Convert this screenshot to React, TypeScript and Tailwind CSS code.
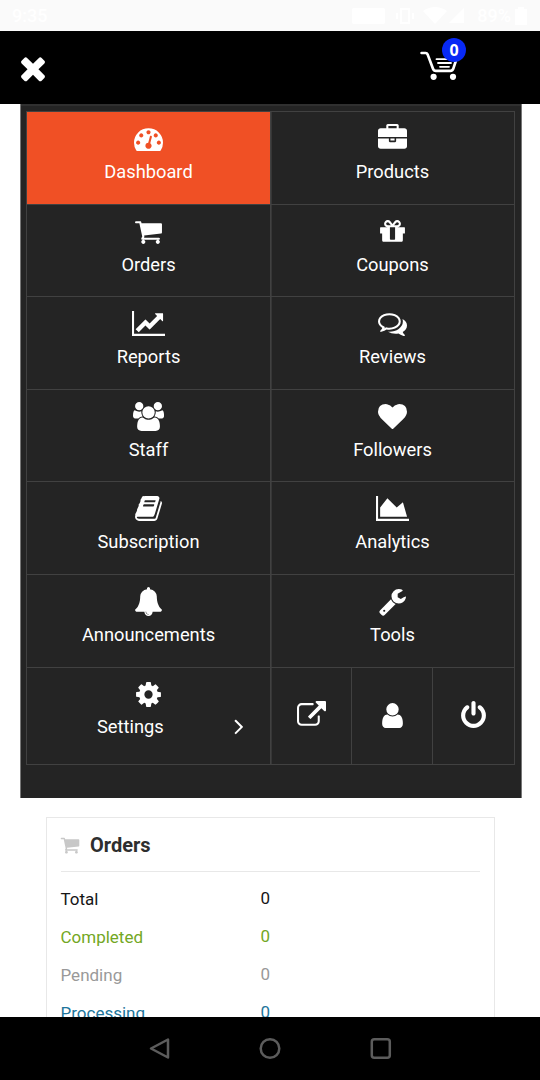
import React from "react";

type Glyph = { d: string; w?: number };

const glyphs: Record<string, Glyph> = {
  dashboard: { d: "M384 1152q0-53-37.5-90.5t-90.5-37.5-90.5 37.5-37.5 90.5 37.5 90.5 90.5 37.5 90.5-37.5 37.5-90.5zm192-448q0-53-37.5-90.5t-90.5-37.5-90.5 37.5-37.5 90.5 37.5 90.5 90.5 37.5 90.5-37.5 37.5-90.5zm428 481l101-382q6-26-7.5-48.5t-38.5-29.5-48 6.5-30 39.5l-101 382q-60 5-107 43.5t-63 98.5q-20 77 20 146t117 89 146-20 89-117q16-60-6-117t-72-91zm660-33q0-53-37.5-90.5t-90.5-37.5-90.5 37.5-37.5 90.5 37.5 90.5 90.5 37.5 90.5-37.5 37.5-90.5zm-640-640q0-53-37.5-90.5t-90.5-37.5-90.5 37.5-37.5 90.5 37.5 90.5 90.5 37.5 90.5-37.5 37.5-90.5zm448 192q0-53-37.5-90.5t-90.5-37.5-90.5 37.5-37.5 90.5 37.5 90.5 90.5 37.5 90.5-37.5 37.5-90.5zm320 448q0 261-141 483-19 29-54 29h-1402q-35 0-54-29-141-221-141-483 0-182 71-348t191-286 286-191 348-71 348 71 286 191 191 286 71 348z" },
  briefcase: { d: "M640 256h512v-128h-512v128zm1152 640v480q0 66-47 113t-113 47h-1472q-66 0-113-47t-47-113v-480h672v160q0 26 19 45t45 19h320q26 0 45-19t19-45v-160h672zm-768 0v128h-256v-128h256zm768-480v384h-1792v-384q0-66 47-113t113-47h352v-160q0-40 28-68t68-28h576q40 0 68 28t28 68v160h352q66 0 113 47t47 113z" },
  cart: { d: "M704 1536q0 52-38 90t-90 38-90-38-38-90 38-90 90-38 90 38 38 90zm896 0q0 52-38 90t-90 38-90-38-38-90 38-90 90-38 90 38 38 90zm128-1088v512q0 24-16.5 42.5t-40.5 21.5l-1044 122q13 60 13 70 0 16-24 64h920q26 0 45 19t19 45-19 45-45 19h-1024q-26 0-45-19t-19-45q0-11 8-31.5t16-36 21.5-40 15.5-29.5l-177-823h-204q-26 0-45-19t-19-45 19-45 45-19h256q16 0 28.5 6.5t19.5 15.5 13 24.5 8 26 5.5 29.5 4.5 26h1201q26 0 45 19t19 45z" },
  gift: { d: "M1056 1356v-716h-320v716q0 25 18 38.5t46 13.5h192q28 0 46-13.5t18-38.5zm-456-844h195l-126-161q-26-31-69-31-40 0-68 28t-28 68 28 68 68 28zm688-96q0-40-28-68t-68-28q-43 0-69 31l-125 161h194q40 0 68-28t28-68zm376 256v320q0 14-9 23t-23 9h-96v416q0 40-28 68t-68 28h-1088q-40 0-68-28t-28-68v-416h-96q-14 0-23-9t-9-23v-320q0-14 9-23t23-9h440q-93 0-158.5-65.5t-65.5-158.5 65.5-158.5 158.5-65.5q107 0 168 77l128 165 128-165q61-77 168-77 93 0 158.5 65.5t65.5 158.5-65.5 158.5-158.5 65.5h440q14 0 23 9t9 23z" },
  line: { w: 2048, d: "M2048 1536v128h-2048v-1536h128v1408h1920zm-128-1248v435q0 21-19.5 29.5t-35.5-7.5l-121-121-633 633q-10 10-23 10t-23-10l-233-233-416 416-192-192 585-585q10-10 23-10t23 10l233 233 464-464-121-121q-16-16-7.5-35.5t29.5-19.5h435q14 0 23 9t9 23z" },
  comments: { d: "M704 384q-153 0-286 52t-211.5 141-78.5 191q0 82 53 158t149 132l97 56-35 84q34-20 62-39l44-31 53 10q78 14 153 14 153 0 286-52t211.5-141 78.5-191-78.5-191-211.5-141-286-52zm0-128q191 0 353.5 68.5t256.5 186.5 94 257-94 257-256.5 186.5-353.5 68.5q-86 0-176-16-124 88-278 128-36 9-86 16h-3q-11 0-20.5-8t-11.5-21q-1-3-1-6.5t.5-6.5 2-6l2.5-5 3.5-5.5 4-5 4.5-5 4-4.5q5-6 23-25t26-29.5 22.5-29 25-38.5 20.5-44q-124-72-195-177t-71-224q0-139 94-257t256.5-186.5 353.5-68.5zm822 1169q10 24 20.5 44t25 38.5 22.5 29 26 29.5 23 25q1 1 4 4.5t4.5 5 4 5 3.5 5.5l2.5 5 2 6 .5 6.5-1 6.5q-3 14-13 22t-22 7q-50-7-86-16-154-40-278-128-90 16-176 16-271 0-472-132 58 4 88 4 161 0 309-45t264-129q125-92 192-212t67-254q0-77-23-152 129 71 204 178t75 230q0 120-71 224.5t-195 176.5z" },
  group: { w: 1920, d: "M593 896q-162 5-265 128h-134q-82 0-138-40.5t-56-118.5q0-353 124-353 6 0 43.5 21t97.5 42.5 119 21.5q67 0 133-23-5 37-5 66 0 139 81 256zm1071 637q0 120-73 189.5t-194 69.5h-874q-121 0-194-69.5t-73-189.5q0-53 3.5-103.5t14-109 26.5-108.5 43-97.5 62-81 85.5-53.5 111.5-20q10 0 43 21.5t73 48 107 48 135 21.5 135-21.5 107-48 73-48 43-21.5q61 0 111.5 20t85.5 53.5 62 81 43 97.5 26.5 108.5 14 109 3.5 103.5zm-1024-1277q0 106-75 181t-181 75-181-75-75-181 75-181 181-75 181 75 75 181zm704 384q0 159-112.5 271.5t-271.5 112.5-271.5-112.5-112.5-271.5 112.5-271.5 271.5-112.5 271.5 112.5 112.5 271.5zm576 225q0 78-56 118.5t-138 40.5h-134q-103-123-265-128 81-117 81-256 0-29-5-66 66 23 133 23 59 0 119-21.5t97.5-42.5 43.5-21q124 0 124 353zm-128-609q0 106-75 181t-181 75-181-75-75-181 75-181 181-75 181 75 75 181z" },
  heart: { d: "M896 1664q-26 0-44-18l-624-602q-10-8-27.5-26t-55.5-65.5-68-97.5-53.5-121-23.5-138q0-220 127-344t351-124q62 0 126.5 21.5t120 58 95.5 68.5 76 68q36-36 76-68t95.5-68.5 120-58 126.5-21.5q224 0 351 124t127 344q0 221-229 450l-623 600q-18 18-44 18z" },
  book: { d: "M1703 478q40 57 18 129l-275 906q-19 64-76.5 107.5t-122.5 43.5h-923q-77 0-148.5-53.5t-99.5-131.5q-24-67-2-127 0-4 3-27t4-37q1-8-3-21.5t-3-19.5q2-11 8-21t16.5-23.5 16.5-23.5q23-38 45-91.5t30-91.5q3-10 .5-30t-.5-28q3-11 17-28t17-23q21-36 42-92t25-90q1-9-2.5-32t.5-28q4-13 22-30.5t22-22.5q19-26 42.5-84.5t27.5-96.5q1-8-3-25.5t-2-26.5q2-8 9-18t18-23 17-21q8-12 16.5-30.5t15-35 16-36 19.5-32 26.5-23.5 36-11.5 47.5 5.5l-1 3q38-9 51-9h761q74 0 114 56t18 130l-274 906q-36 119-71.5 153.5t-128.5 34.5h-869q-27 0-38 15-11 16-1 43 24 70 144 70h923q29 0 56-15.5t35-41.5l300-987q7-22 5-57 38 15 59 43zm-1064 2q-4 13 2 22.5t20 9.5h608q13 0 25.5-9.5t16.5-22.5l21-64q4-13-2-22.5t-20-9.5h-608q-13 0-25.5 9.5t-16.5 22.5zm-83 256q-4 13 2 22.5t20 9.5h608q13 0 25.5-9.5t16.5-22.5l21-64q4-13-2-22.5t-20-9.5h-608q-13 0-25.5 9.5t-16.5 22.5z" },
  area: { w: 2048, d: "M2048 1536v128h-2048v-1536h128v1408h1920zm-384-1024l256 896h-1664v-576l448-576 576 576z" },
  bell: { d: "M912 1696q0-16-16-16-59 0-101.5-42.5t-42.5-101.5q0-16-16-16t-16 16q0 73 51.5 124.5t124.5 51.5q16 0 16-16zm816-288q0 52-38 90t-90 38h-448q0 106-75 181t-181 75-181-75-75-181h-448q-52 0-90-38t-38-90q50-42 91-88t85-119.5 74.5-158.5 50-206 19.5-260q0-152 117-282.5t307-158.5q-8-19-8-39 0-40 28-68t68-28 68 28 28 68q0 20-8 39 190 28 307 158.5t117 282.5q0 139 19.5 260t50 206 74.5 158.5 85 119.5 91 88z" },
  wrench: { d: "M448 1472q0-26-19-45t-45-19-45 19-19 45 19 45 45 19 45-19 19-45zm644-420l-682 682q-37 37-90 37-52 0-91-37l-106-108q-38-36-38-90 0-53 38-91l681-681q39 98 114.5 173.5t173.5 114.5zm634-435q0 39-23 106-47 134-164.5 217.5t-258.5 83.5q-185 0-316.5-131.5t-131.5-316.5 131.5-316.5 316.5-131.5q58 0 121.5 16.5t107.5 46.5q16 11 16 28t-16 28l-293 169v224l193 107q5-3 79-48.5t135.5-81 70.5-35.5q15 0 23.5 10t8.5 25z" },
  cog: { d: "M1152 896q0-106-75-181t-181-75-181 75-75 181 75 181 181 75 181-75 75-181zm512-109v222q0 12-8 23t-20 13l-185 28q-19 54-39 91 35 50 107 138 10 12 10 25t-9 23q-27 37-99 108t-94 71q-12 0-26-9l-138-108q-44 23-91 38-16 136-29 186-7 28-36 28h-222q-14 0-24.5-8.5t-11.5-21.5l-28-184q-49-16-90-37l-141 107q-10 9-25 9-14 0-25-11-126-114-165-168-7-10-7-23 0-12 8-23 15-21 51-66.5t54-70.5q-27-50-41-99l-183-27q-13-2-21-12.5t-8-23.5v-222q0-12 8-23t19-13l186-28q14-46 39-92-40-57-107-138-10-12-10-24 0-10 9-23 26-36 98.5-107.5t94.5-71.5q13 0 26 10l138 107q44-23 91-38 16-136 29-186 7-28 36-28h222q14 0 24.5 8.5t11.5 21.5l28 184q49 16 90 37l142-107q9-9 24-9 13 0 25 10 129 119 165 170 7 8 7 22 0 12-8 23-15 21-51 66.5t-54 70.5q26 50 41 98l183 28q13 2 21 12.5t8 23.5z" },
  external: { d: "M1408 928v320q0 119-84.5 203.5t-203.5 84.5h-832q-119 0-203.5-84.5t-84.5-203.5v-832q0-119 84.5-203.5t203.5-84.5h704q14 0 23 9t9 23v64q0 14-9 23t-23 9h-704q-66 0-113 47t-47 113v832q0 66 47 113t113 47h832q66 0 113-47t47-113v-320q0-14 9-23t23-9h64q14 0 23 9t9 23zm384-864v512q0 26-19 45t-45 19-45-19l-176-176-652 652q-10 10-23 10t-23-10l-114-114q-10-10-10-23t10-23l652-652-176-176q-19-19-19-45t19-45 45-19h512q26 0 45 19t19 45z" },
  user: { d: "M1536 1399q0 109-62.5 187t-150.5 78h-854q-88 0-150.5-78t-62.5-187q0-85 8.5-160.5t31.5-152 58.5-131 94-89 134.5-34.5q131 128 313 128t313-128q76 0 134.5 34.5t94 89 58.5 131 31.5 152 8.5 160.5zm-256-887q0 159-112.5 271.5t-271.5 112.5-271.5-112.5-112.5-271.5 112.5-271.5 271.5-112.5 271.5 112.5 112.5 271.5z" },
  power: { d: "M1664 896q0 156-61 298t-164 245-245 164-298 61-298-61-245-164-164-245-61-298q0-182 80.5-343t226.5-270q43-32 95.5-25t83.5 50q32 42 24.5 94.5t-49.5 84.5q-98 74-151.5 181t-53.5 228q0 104 40.5 198.5t109.5 163.5 163.5 109.5 198.5 40.5 198.5-40.5 163.5-109.5 109.5-163.5 40.5-198.5q0-121-53.5-228t-151.5-181q-42-32-49.5-84.5t24.5-94.5q31-43 84-50t95 25q146 109 226.5 270t80.5 343zm-640-768v640q0 52-38 90t-90 38-90-38-38-90v-640q0-52 38-90t90-38 90 38 38 90z" },
  times: { d: "M1490 1322q0 40-28 68l-136 136q-28 28-68 28t-68-28l-294-294-294 294q-28 28-68 28t-68-28l-136-136q-28-28-28-68t28-68l294-294-294-294q-28-28-28-68t28-68l136-136q28-28 68-28t68 28l294 294 294-294q28-28 68-28t68 28l136 136q28 28 28 68t-28 68l-294 294 294 294q28 28 28 68z" },
  angle: { d: "M1171 960q0 13-10 23l-466 466q-10 10-23 10t-23-10l-50-50q-10-10-10-23t10-23l393-393-393-393q-10-10-10-23t10-23l50-50q10-10 23-10t23 10l466 466q10 10 10 23z" },
};

function Icon({ name, className = "h-[29px]" }: { name: string; className?: string }) {
  const g = glyphs[name];
  return (
    <svg viewBox={`0 0 ${g.w ?? 1792} 1792`} className={`shrink-0 w-auto ${className}`} fill="currentColor">
      <path d={g.d} />
    </svg>
  );
}

const tiles = [
  ["dashboard", "Dashboard"],
  ["briefcase", "Products"],
  ["cart", "Orders"],
  ["gift", "Coupons"],
  ["line", "Reports"],
  ["comments", "Reviews"],
  ["group", "Staff"],
  ["heart", "Followers"],
  ["book", "Subscription"],
  ["area", "Analytics"],
  ["bell", "Announcements"],
  ["wrench", "Tools"],
];

const orderRows = [
  ["Total", "text-[#161616]"],
  ["Completed", "text-[#73a724]"],
  ["Pending", "text-[#999999]"],
  ["Processing", "text-[#21759b]"],
];

function StatusBar() {
  return (
    <div className="flex h-[31px] shrink-0 items-center bg-[#fafafa] pl-[12px] pr-[13px] text-[18px] font-medium text-white">
      <span className="flex-1">9:35</span>
      <div className="h-4 w-[33px] rounded-[2px] bg-white" />
      <svg viewBox="0 0 18 16" className="ml-[11px] h-4 w-[18px]" fill="none" stroke="white" strokeWidth="2">
        <path d="M5 1h8v14H5zM1 5v6M17 5v6" />
      </svg>
      <svg viewBox="0 0 24 17" className="ml-[9px] h-[17px] w-6" fill="white">
        <path d="M0 4Q12-4 24 4L12 17z" />
      </svg>
      <svg viewBox="0 0 15 15" className="ml-[2px] h-[15px] w-[15px]" fill="white">
        <path d="M15 0v15H0z" />
      </svg>
      <span className="ml-[13px]">89%</span>
      <svg viewBox="0 0 12 18" className="ml-[4px] h-[18px] w-3" fill="white">
        <path d="M3 0h6v2h3v16H0V2h3z" />
      </svg>
    </div>
  );
}

function Header() {
  return (
    <header className="flex h-[73px] shrink-0 items-center justify-between bg-black pl-[15px] pr-[82px] text-white">
      <Icon name="times" className="mt-px h-[36px]" />
      <div className="relative mb-[6px] h-[31px] w-[39px]">
        <svg viewBox="0 0 39 31" className="h-[31px] w-[39px]" fill="none" stroke="white" strokeLinecap="round" strokeLinejoin="round">
          <path d="M2.6 4H6.6Q8 4 8.7 5.6L14 19.7Q14.8 21.8 16.8 21.8H31.5Q33.7 21.8 34.3 19.7L37.3 10.5" strokeWidth="2.7" />
          <path d="M17.5 10.2H34M19 14H32M21 17.8H30" strokeWidth="1.8" />
          <circle cx="14.6" cy="27.8" r="3.1" fill="white" stroke="none" />
          <circle cx="34" cy="27.8" r="3.1" fill="white" stroke="none" />
        </svg>
        <span className="absolute -top-[11px] left-[23px] flex h-6 w-6 items-center justify-center rounded-full bg-[#0829f5] font-['Open_Sans',sans-serif] text-[16px] font-bold leading-none">0</span>
      </div>
    </header>
  );
}

export default function App() {
  return (
    <div className="flex h-[1080px] w-[540px] flex-col overflow-hidden bg-white font-['Roboto',sans-serif]">
      <StatusBar />
      <Header />
      <main className="min-h-0 flex-1 overflow-hidden">
        <nav className="ml-[20px] h-[694px] w-[502px] border-l border-r border-[#777] bg-[#242424] px-[5px] pt-[7px] text-[18.3px] text-white shadow-[inset_0_2px_0_#303030]">
          <div className="grid w-[489px] grid-cols-[244px_244px] grid-rows-[93px_92px_93px_92px_93px_93px_97px] border-l border-t border-[#414141]">
            {tiles.map(([icon, label], i) => (
              <a
                key={label}
                className={`flex flex-col items-center border-b border-r border-[#414141] pt-[12px] ${i % 2 ? "shadow-[inset_1px_0_0_#363636]" : ""} ${i === 0 ? "bg-[#f05025]" : ""}`}
              >
                <Icon name={icon} />
                <span className="mt-[7px] leading-6">{label}</span>
              </a>
            ))}
            <a className="flex flex-col items-center border-b border-r border-[#414141] pt-[12px]">
              <Icon name="cog" />
              <span className="mt-[6px] flex h-6 w-full items-center pl-[70px] pr-[18px] leading-6">
                <span className="flex-1">Settings</span>
                <Icon name="angle" className="-mt-[2px] h-[26px]" />
              </span>
            </a>
            <div className="grid grid-cols-[81px_81px_82px] shadow-[inset_1px_0_0_#363636]">
              {["external", "user", "power"].map((icon) => (
                <a key={icon} className="flex items-center justify-center border-b border-r border-[#414141] pb-px">
                  <Icon name={icon} />
                </a>
              ))}
            </div>
          </div>
        </nav>
        <section className="ml-[46px] mt-[19px] h-[320px] w-[449px] border border-[#e8e8e8] px-[14px]">
          <h2 className="flex h-[54px] items-center border-b border-[#e8e8e8] text-[20px] font-bold text-[#2e2e2e]">
            <Icon name="cart" className="-ml-px h-[20px] text-[#c8c8c8]" />
            <span className="ml-[10px]">Orders</span>
          </h2>
          <ul className="-ml-[0.5px] pt-[8px] text-[17px]">
            {orderRows.map(([label, color]) => (
              <li key={label} className={`flex h-[38px] items-center ${color}`}>
                <span className="w-[200px] pt-[2px]">{label}</span>
                <span>0</span>
              </li>
            ))}
          </ul>
        </section>
      </main>
      <footer className="flex h-[63px] shrink-0 items-center bg-black pl-[148px] text-[#5c5c5c]">
        <svg viewBox="0 0 244 24" className="h-6 w-[244px]" fill="none" stroke="currentColor" strokeWidth="2.5" strokeLinejoin="round">
          <path d="M20 2.5v18L3 11.5z" />
          <circle cx="122" cy="11.5" r="9.3" />
          <rect x="223.8" y="2.2" width="18" height="18.5" rx="2.5" />
        </svg>
      </footer>
    </div>
  );
}
